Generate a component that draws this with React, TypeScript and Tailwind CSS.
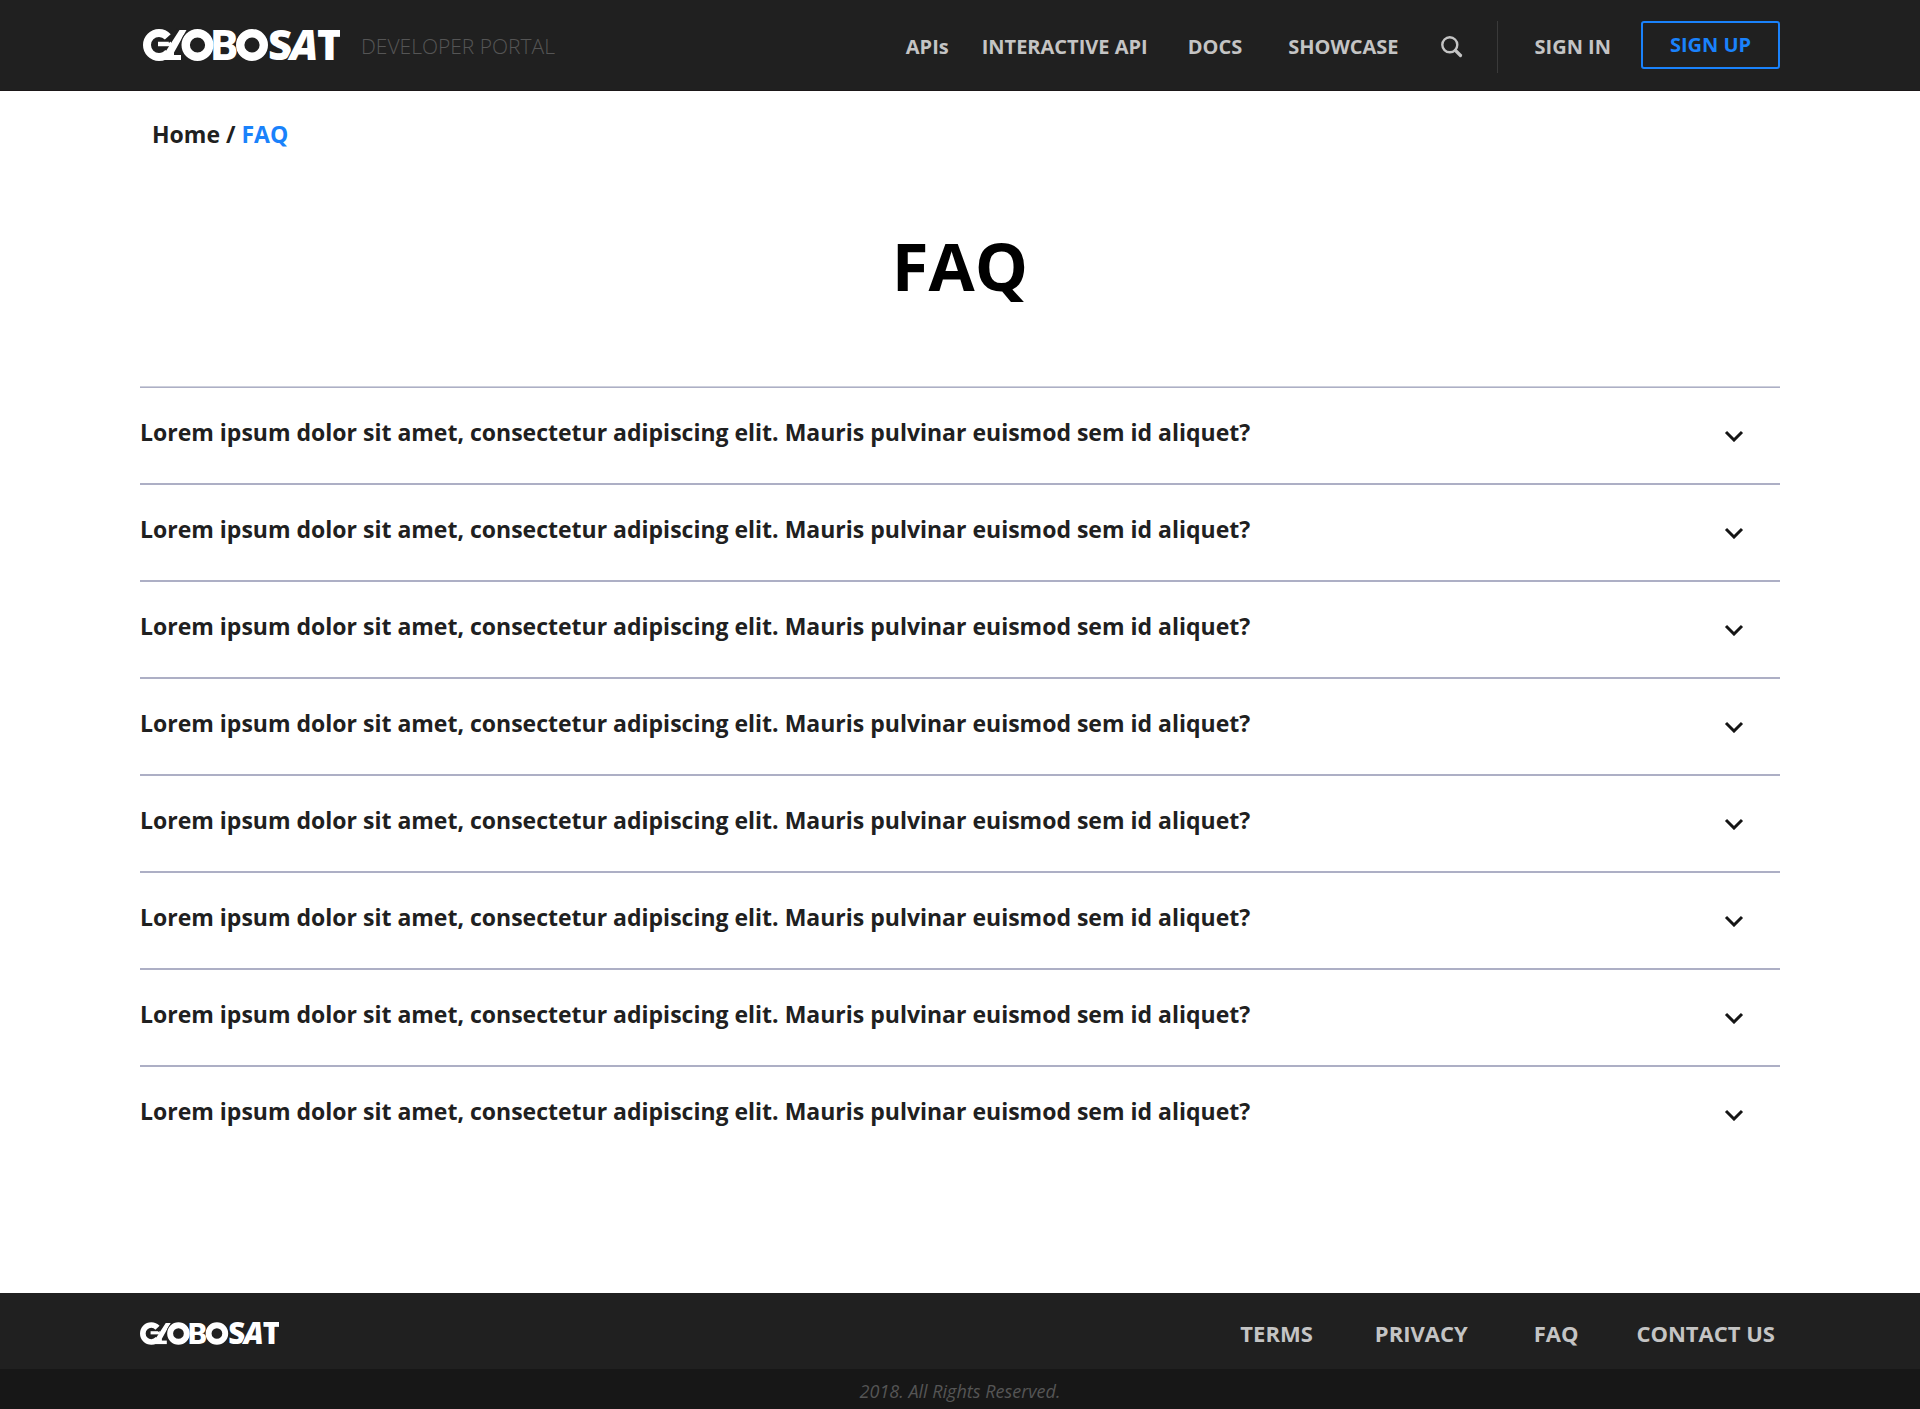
import { useState } from "react";

const SANS = "font-['Open_Sans','Noto_Sans',sans-serif]";

function Logo({ className, gap }: { className: string; gap: string }) {
  return (
    <svg
      viewBox="0 -12 197 58"
      className={className}
      role="img"
      aria-label="Globosat"
      fill="#ffffff"
      stroke={gap}
      strokeWidth="2"
      style={{ paintOrder: "stroke" }}
      fontFamily="'Open Sans', sans-serif"
      fontWeight="800"
      fontSize="42"
    >
      <circle cx="16" cy="17" r="12" fill="none" stroke="#ffffff" strokeWidth="8" strokeDasharray="58 18" strokeDashoffset="-8" />
      <path d="M15 29.500H38" fill="none" stroke="#ffffff" strokeWidth="5" />
      <path d="M15 16H28" fill="none" stroke="#ffffff" strokeWidth="4.500" />
      <path d="M36.500 2H43.500L31 24.500V31H22V24.500Z" fill="#ffffff" stroke="none" />
      <path d="M34.500 1L26 14.500" fill="none" stroke={gap} strokeWidth="1.200" />
      <circle cx="54.500" cy="17" r="17" fill={gap} stroke="none" />
      <circle cx="54.500" cy="17" r="11.800" fill="none" stroke="#ffffff" strokeWidth="8.400" />
      <circle cx="109" cy="17" r="11.800" fill="none" stroke="#ffffff" strokeWidth="8.400" />
      <text x="68" y="32" fontFamily="Roboto, sans-serif" fontWeight="900" stroke="none">B</text>
      <text x="125" y="32">S</text>
      <text x="147" y="32" fontStyle="italic">A</text>
      <text x="174" y="32">T</text>
    </svg>
  );
}

function SearchIcon() {
  return (
    <svg viewBox="0 0 22 22" className="size-[22px]" fill="none" stroke="#c4c4c4" strokeLinecap="round" aria-hidden="true">
      <circle cx="8.800" cy="8.800" r="7.500" strokeWidth="2.400" />
      <path d="M14.500 14.500L19.500 19.500" strokeWidth="3.200" />
    </svg>
  );
}

function Header() {
  return (
    <header className="border-b border-[#1b1718] bg-[#202020] px-[140px]">
      <div className="mx-auto flex h-[90px] max-w-[1640px] items-center justify-between">
        <a href="#home" className="flex items-center gap-[21px] pl-[3px]">
          <Logo className="h-[58px] w-[197px]" gap="#202020" />
          <span className="whitespace-nowrap pt-0.5 text-[21px] font-light leading-8 text-[#555555]">DEVELOPER PORTAL</span>
        </a>
        <div className="flex items-center whitespace-nowrap text-[20px] font-bold leading-7 text-[#c4c4c4]">
          <nav aria-label="Main" className="flex items-center pt-1">
            <a href="#apis" className="mr-[33px]">APIs</a>
            <a href="#interactive" className="mr-10">INTERACTIVE API</a>
            <a href="#docs" className="mr-[46px]">DOCS</a>
            <a href="#showcase" className="mr-[42px]">SHOWCASE</a>
            <button type="button" aria-label="Search"><SearchIcon /></button>
            <span className="ml-[34px] mr-[37px] h-[52px] w-px bg-[#3a3a3a]" />
            <a href="#signin" className="mr-[30px]">SIGN IN</a>
          </nav>
          <button type="button" className="h-12 w-[139px] rounded-[3px] border-2 border-[#1a82fb] text-[#1a82fb]">SIGN UP</button>
        </div>
      </div>
    </header>
  );
}

const questions = Array.from(
  { length: 8 },
  () => "Lorem ipsum dolor sit amet, consectetur adipiscing elit. Mauris pulvinar euismod sem id aliquet?",
);

function FaqList() {
  const [open, setOpen] = useState<number | null>(null);
  return (
    <ul className="border-t border-[#cdd0dc]">
      {questions.map((q, i) => (
        <li key={i} className="border-t-2 border-[#adafc5] first:border-t">
          <button
            type="button"
            aria-expanded={open === i}
            onClick={() => setOpen(open === i ? null : i)}
            className="flex h-[95px] w-full items-center justify-between pr-9 text-left text-[23px] font-bold leading-8 text-[#202020]"
          >
            <span className="pb-2">{q}</span>
            <svg viewBox="0 0 20 12" className="h-3 w-5 shrink-0" fill="none" stroke="#151515" strokeWidth="3" aria-hidden="true">
              <path d="M2 2L10 10L18 2" />
            </svg>
          </button>
        </li>
      ))}
    </ul>
  );
}

function Footer() {
  return (
    <footer className="bg-[#202020]">
      <div className="px-[140px]">
        <div className="mx-auto flex h-[76px] max-w-[1640px] items-center justify-between pr-[5px] pt-1">
          <a href="#home"><Logo className="h-[41px] w-[139px]" gap="#202020" /></a>
          <nav aria-label="Footer" className="flex items-center whitespace-nowrap text-[22px] font-bold leading-8 text-[#c4c4c4]">
            <a href="#terms" className="mr-[62px]">TERMS</a>
            <a href="#privacy" className="mr-[66px]">PRIVACY</a>
            <a href="#faq" className="mr-[58px]">FAQ</a>
            <a href="#contact">CONTACT US</a>
          </nav>
        </div>
      </div>
      <p className="flex h-10 items-center justify-center bg-[#171717] pt-1 text-[18px] italic leading-6 text-[#555555]">
        2018. All Rights Reserved.
      </p>
    </footer>
  );
}

export default function App() {
  return (
    <div className={`flex min-h-screen flex-col bg-white ${SANS}`}>
      <Header />
      <main className="flex-1 px-[140px]">
        <div className="mx-auto max-w-[1640px]">
          <nav aria-label="Breadcrumb" className="pl-3 pt-[27px] text-[23px] font-bold leading-8 text-[#202020]">
            <a href="#home">Home</a> / <a href="#faq" className="text-[#1a82fb]" aria-current="page">FAQ</a>
          </nav>
          <h1 className="mb-[72px] mt-[66px] text-center text-[67px] font-bold leading-[98px] text-black">FAQ</h1>
          <FaqList />
        </div>
      </main>
      <Footer />
    </div>
  );
}
